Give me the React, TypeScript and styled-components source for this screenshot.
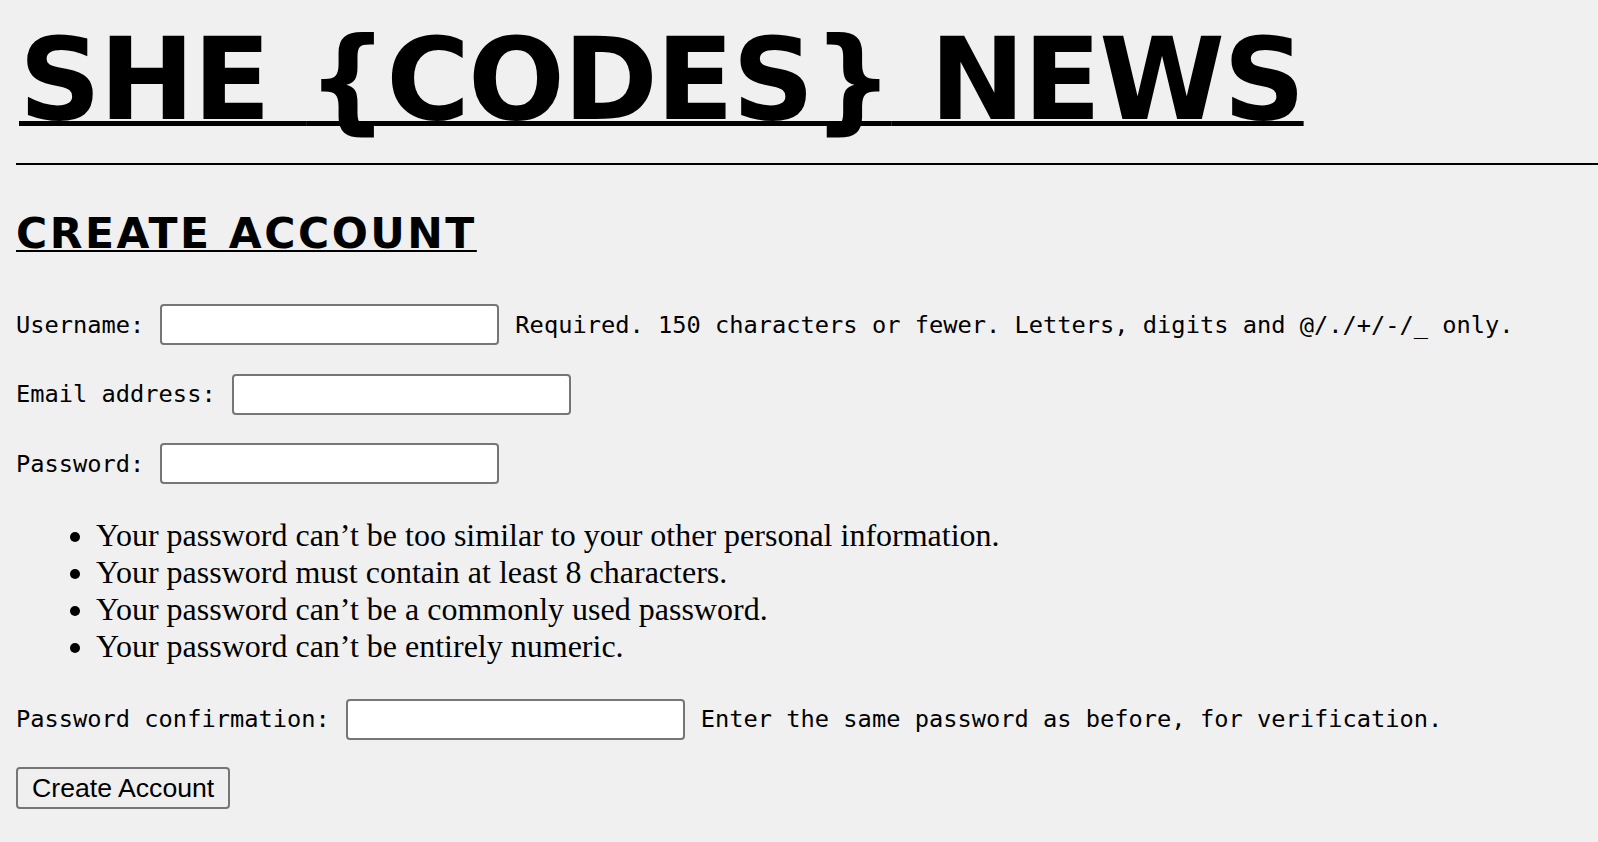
import { FC } from 'react'
import { createGlobalStyle, styled } from 'styled-components'

const GlobalStyle = createGlobalStyle`
  html, body {
    margin: 0;
    padding: 0;
    background: #f0f0f0;
    color: #000;
  }
  body {
    overflow-x: hidden;
  }
`

interface FieldProps {
  id: string
  label: string
  type: string
  help?: string
}

const fields: FieldProps[] = [
  {
    id: 'username',
    label: 'Username:',
    type: 'text',
    help: 'Required. 150 characters or fewer. Letters, digits and @/./+/-/_ only.',
  },
  { id: 'email', label: 'Email address:', type: 'email' },
  { id: 'password1', label: 'Password:', type: 'password' },
]

const passwordRules = [
  'Your password can’t be too similar to your other personal information.',
  'Your password must contain at least 8 characters.',
  'Your password can’t be a commonly used password.',
  'Your password can’t be entirely numeric.',
]

const Field: FC<FieldProps> = ({ id, label, type, help }) => (
  <Row>
    <Label htmlFor={id}>{label}</Label>
    <Input id={id} name={id} type={type} />
    {help && <HelpText>{help}</HelpText>}
  </Row>
)

const App: FC = () => (
  <>
    <GlobalStyle />
    <Page>
      <Header>
        <SiteTitle>
          <TitleLink href="#">SHE {'{CODES}'} NEWS</TitleLink>
        </SiteTitle>
      </Header>
      <Divider />
      <PageHeading>CREATE ACCOUNT</PageHeading>
      <Form onSubmit={(e) => e.preventDefault()}>
        {fields.map((field) => (
          <Field key={field.id} {...field} />
        ))}
        <HelpList>
          {passwordRules.map((rule) => (
            <li key={rule}>{rule}</li>
          ))}
        </HelpList>
        <Field
          id="password2"
          label="Password confirmation:"
          type="password"
          help="Enter the same password as before, for verification."
        />
        <SubmitButton type="submit">Create Account</SubmitButton>
      </Form>
    </Page>
  </>
)

const Page = styled.div`
  padding: 0 0 40px 16px;
`

const Header = styled.header`
  padding-top: 23px;
`

const SiteTitle = styled.h1`
  margin: 0;
  font-family: 'DejaVu Sans', sans-serif;
  font-weight: 700;
  font-size: 114px;
  line-height: 1;
  letter-spacing: -1.8px;
`

const TitleLink = styled.a`
  color: #000;
  margin-left: 3px;
  text-decoration: underline;
  text-decoration-thickness: 5px;
  text-underline-offset: 2px;
  text-decoration-skip-ink: none;
`

const Divider = styled.hr`
  margin: 26px 0 0;
  border: 0;
  border-top: 2px solid #000;
  height: 0;
`

const PageHeading = styled.h2`
  margin: 48px 0 0;
  font-family: 'DejaVu Sans', sans-serif;
  font-weight: 700;
  font-size: 42.5px;
  line-height: 1;
  letter-spacing: 2.5px;
  text-decoration: underline;
  text-decoration-thickness: 2px;
  text-underline-offset: 2px;
  text-decoration-skip-ink: none;
`

const Form = styled.form`
  display: flex;
  flex-direction: column;
  align-items: flex-start;
  gap: 28.5px;
  margin-top: 48.5px;
`

const Row = styled.div`
  display: flex;
  align-items: center;
  gap: 16px;
  height: 41px;
  font-family: 'DejaVu Sans Mono', monospace;
  font-size: 23.7px;
`

const Label = styled.label`
  white-space: nowrap;
`

const HelpText = styled.span`
  white-space: nowrap;
`

const Input = styled.input`
  box-sizing: border-box;
  width: 339px;
  height: 41px;
  padding: 2px 4px;
  border: 2px solid #767676;
  border-radius: 4px;
  background: #fff;
  font-family: 'Liberation Sans', Arial, sans-serif;
  font-size: 26.67px;
`

const HelpList = styled.ul`
  margin: 4.3px 0 5.5px;
  padding-left: 80px;
  font-family: 'Liberation Serif', 'Times New Roman', serif;
  font-size: 32px;
  line-height: normal;
`

const SubmitButton = styled.button`
  box-sizing: border-box;
  height: 42px;
  margin-top: -1px;
  padding: 2px 14px;
  border: 2px solid #767676;
  border-radius: 4px;
  background: #efefef;
  color: #000;
  font-family: 'Liberation Sans', Arial, sans-serif;
  font-size: 26.67px;
  line-height: 1;
`

export default App
